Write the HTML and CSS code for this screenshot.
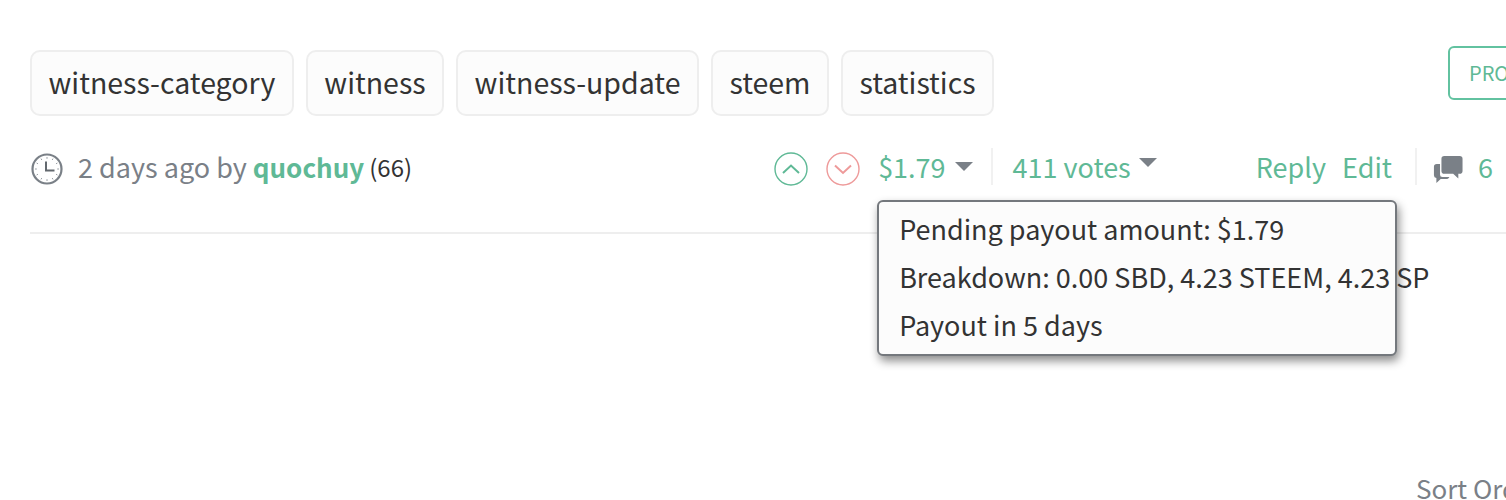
FILE: index.html
```html
<!DOCTYPE html>
<html lang="en">
<head>
<meta charset="utf-8">
<title>Post footer</title>
<link rel="stylesheet" href="styles.css">
</head>
<body>
<main class="page">
  <section class="tag-row">
    <ul class="tags">
      <li class="tag">witness-category</li>
      <li class="tag">witness</li>
      <li class="tag">witness-update</li>
      <li class="tag">steem</li>
      <li class="tag">statistics</li>
    </ul>
    <button class="promote">PROMOTE</button>
  </section>
  <section class="meta-row">
    <div class="byline">
      <svg class="clock" viewBox="0 0 32 32" width="32" height="32" aria-hidden="true">
        <circle cx="16" cy="16" r="14.500" fill="none" stroke="#7a8087" stroke-width="2.200"/>
        <path d="M15 8.500V17.500H23.500" fill="none" stroke="#63696f" stroke-width="2"/>
        <path d="M16 4v1.800M16 26.200V28M4 16h1.800M26.200 16H28M10 5.600l.8 1.400M22 5.600l-.8 1.400M5.600 10l1.400.8M26.400 10l-1.400.8M5.600 22l1.400-.8M26.400 22l-1.400-.8M10 26.400l.8-1.400M22 26.400l-.8-1.400" stroke="#9a9fa5" stroke-width="1"/>
      </svg>
      <span class="when">2 days ago by</span>
      <a class="author">quochuy</a>
      <span class="rep">(66)</span>
    </div>
    <div class="actions">
      <div class="vote">
        <svg class="vote-btn" viewBox="0 0 34 34" width="34" height="34" aria-hidden="true">
          <circle cx="17" cy="17" r="16" fill="none" stroke="#5fb996" stroke-width="1.400"/>
          <path d="M9 21l8-7.500 8 7.500" fill="none" stroke="#5fb996" stroke-width="2"/>
        </svg>
        <svg class="vote-btn" viewBox="0 0 34 34" width="34" height="34" aria-hidden="true">
          <circle cx="17" cy="17" r="16" fill="none" stroke="#ee9a9a" stroke-width="1.400"/>
          <path d="M9 13.500l8 7.500 8-7.500" fill="none" stroke="#ee9a9a" stroke-width="2"/>
        </svg>
      </div>
      <div class="cell payout">
        <span class="green">$1.79</span>
        <span class="caret"></span>
        <div class="tooltip">
          <div>Pending payout amount: $1.79</div>
          <div>Breakdown: 0.00 SBD, 4.23 STEEM, 4.23 SP</div>
          <div>Payout in 5 days</div>
        </div>
      </div>
      <div class="cell votes">
        <span class="green">411 votes</span>
        <span class="caret caret-high"></span>
      </div>
      <div class="cell links">
        <a class="green">Reply</a>
        <a class="green">Edit</a>
      </div>
      <div class="comments">
        <svg class="chat" viewBox="0 0 32 30" width="30" height="29" aria-hidden="true">
          <path d="M7.500 9H4a3 3 0 0 0-3 3v9a3 3 0 0 0 2.600 3V29.500L8.200 25h6.300a3 3 0 0 0 2.500-1.300l.5-.7H10a2.500 2.500 0 0 1-2.500-2.500z" fill="#7a8087"/>
          <path d="M12 .5h16.500a3 3 0 0 1 3 3v13a3 3 0 0 1-3 3H27v5l-5.500-5H12a3 3 0 0 1-3-3v-13a3 3 0 0 1 3-3z" fill="#7a8087"/>
        </svg>
        <span class="green count">6</span>
      </div>
    </div>
  </section>
  <div class="sort">Sort Order:</div>
</main>
</body>
</html>
```

FILE: styles.css
```css
* { box-sizing: border-box; }
html, body { margin: 0; padding: 0; background: #fff; }
body { width: 1506px; height: 500px; overflow: hidden; }
.page {
  width: 1506px;
  height: 500px;
  padding: 50px 0 0 30px;
  overflow: hidden;
  font-family: "Noto Sans CJK SC", "Noto Sans", sans-serif;
  font-size: 28.500px;
  color: #333;
}
.tag-row { display: flex; align-items: flex-start; justify-content: space-between; }
.tags { display: flex; gap: 12px; margin: 0; padding: 0; list-style: none; }
.tag {
  height: 66px;
  padding: 0 16.500px 4px;
  display: flex;
  align-items: center;
  background: #fcfcfc;
  border: 2px solid #eee;
  border-radius: 10px;
  white-space: nowrap;
}
.promote {
  flex: none;
  width: 150px;
  height: 54px;
  margin-top: -4px;
  margin-right: -92px;
  padding: 0 0 2px 19px;
  text-align: left;
  font: inherit;
  font-size: 20px;
  color: #5fb996;
  background: #fff;
  border: 2px solid #62c2a0;
  border-radius: 6px;
}
.meta-row {
  height: 118px;
  padding-top: 35px;
  display: flex;
  justify-content: space-between;
  align-items: flex-start;
  border-bottom: 2px solid #eee;
}
.byline { display: flex; align-items: center; height: 36px; font-size: 27px; }
.clock { margin: 0 15px 0 1px; }
.when { color: #7a8087; margin-bottom: 5px; }
.author { margin-left: 6px; margin-bottom: 5px; color: #5fb996; font-weight: 700; font-size: 26px; }
.rep { margin-left: 5px; margin-bottom: 5px; font-size: 24px; }
.actions { display: flex; align-items: center; height: 36px; font-size: 27px; }
.green { color: #5fb996; }
.vote { display: flex; gap: 18px; margin-right: 18px; }
.vote-btn { display: block; }
.cell { display: flex; align-items: center; height: 37px; margin-bottom: 5px; }
.payout { position: relative; gap: 9px; padding-right: 18px; border-right: 2px solid #f1f1f1; }
.votes { gap: 8px; padding-left: 20px; margin-right: 99px; }
.caret { width: 0; height: 0; border-left: 9px solid transparent; border-right: 9px solid transparent; border-top: 9px solid #7a8087; }
.caret-high { margin-bottom: 8px; }
.links { gap: 16px; padding-right: 23px; border-right: 2px solid #f1f1f1; }
.comments { display: flex; align-items: center; gap: 15px; padding: 0 13px 0 16px; height: 36px; }
.count { margin-bottom: 5px; }
.tooltip {
  position: absolute;
  top: 52px;
  left: -1px;
  width: 520px;
  height: 156px;
  padding: 3px 20px;
  background: #fcfcfc;
  border: 2px solid #74787d;
  border-radius: 6px;
  box-shadow: 2px 5px 10px rgba(0, 0, 0, 0.45);
  color: #333;
  line-height: 48px;
  white-space: nowrap;
}
.sort {
  margin-top: 239px;
  margin-left: 1386px;
  font-size: 26px;
  color: #7a8087;
  white-space: nowrap;
  line-height: 30px;
}
```
